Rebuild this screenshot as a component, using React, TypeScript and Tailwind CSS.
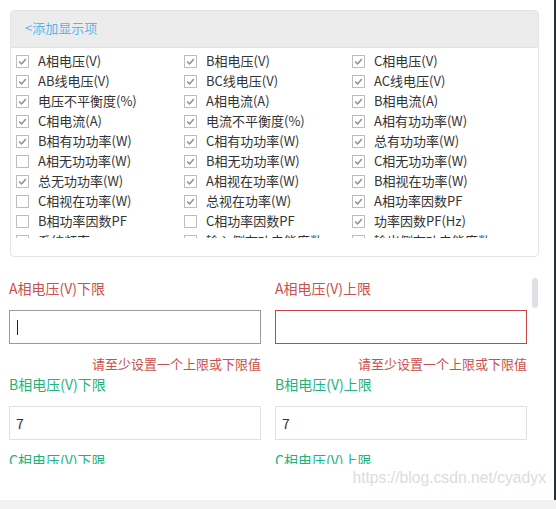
import React from 'react';

const items: [string, boolean][] = [
  ['A相电压(V)', true], ['B相电压(V)', true], ['C相电压(V)', true],
  ['AB线电压(V)', true], ['BC线电压(V)', true], ['AC线电压(V)', true],
  ['电压不平衡度(%)', true], ['A相电流(A)', true], ['B相电流(A)', true],
  ['C相电流(A)', true], ['电流不平衡度(%)', true], ['A相有功功率(W)', true],
  ['B相有功功率(W)', true], ['C相有功功率(W)', true], ['总有功功率(W)', true],
  ['A相无功功率(W)', false], ['B相无功功率(W)', true], ['C相无功功率(W)', true],
  ['总无功功率(W)', true], ['A相视在功率(W)', true], ['B相视在功率(W)', true],
  ['C相视在功率(W)', false], ['总视在功率(W)', true], ['A相功率因数PF', true],
  ['B相功率因数PF', false], ['C相功率因数PF', false], ['功率因数PF(Hz)', true],
  ['系统频率', false], ['输入侧有功电能度数', false], ['输出侧有功电能度数', false],
];

function Check({ checked }: { checked: boolean }) {
  return (
    <span className="w-[13px] h-[13px] border border-[#bdbdbd] bg-white flex items-center justify-center shrink-0">
      {checked && (
        <svg width="9" height="9" viewBox="0 0 9 9">
          <path d="M1.2 4.6 L3.6 7 L7.8 2" fill="none" stroke="#8a8a8a" strokeWidth="1.4" />
        </svg>
      )}
    </span>
  );
}

interface FieldProps {
  label: string;
  value?: string;
  state: 'error' | 'ok';
  focused?: boolean;
}

function Field({ label, value, state, focused }: FieldProps) {
  const err = state === 'error';
  return (
    <div className="flex flex-col">
      <div className={`text-[14px] leading-[20px] ${err ? 'text-[#c9504c]' : 'text-[#21b27a]'}`}>{label}</div>
      <div
        className={`mt-[12px] h-[34px] border flex items-center px-[6px] text-[14px] text-[#333] ${
          err ? (focused ? 'border-[#9a9a9a]' : 'border-[#c84646]') : 'border-[#e0e0e0]'
        }`}
      >
        {focused && <span className="w-px h-[15px] bg-[#222] ml-px" />}
        {value}
      </div>
      {err ? (
        <div className="mt-[10px] h-[20px] text-[13px] leading-[20px] text-right text-[#c9504c]">请至少设置一个上限或下限值</div>
      ) : (
        <div className="h-[10px]" />
      )}
    </div>
  );
}

export default function App() {
  return (
    <div
      className="w-[556px] h-[509px] bg-white relative overflow-hidden flex flex-col"
      style={{ fontFamily: '"Microsoft YaHei", "Noto Sans CJK SC", "Liberation Sans", sans-serif' }}
    >
      <div className="absolute right-0 top-0 w-[2px] h-[500px] bg-[#2b3035]" />

      <div className="mt-[10px] ml-[10px] w-[529px] h-[247px] border border-[#e4e4e4] rounded-[4px] flex flex-col overflow-hidden">
        <div className="h-[37px] shrink-0 bg-[#ececec] border-b border-[#e2e2e2] flex items-center pl-[14px] pb-[2px] text-[13px] text-[#5ab4f0]">
          &lt;添加显示项
        </div>
        <div className="h-[190px] overflow-hidden pt-[3px] pl-[5px]">
          <div className="grid grid-cols-[168px_168px_168px]">
            {items.map(([name, on]) => (
              <div key={name} className="h-[20px] flex items-center gap-[9px] text-[13px] text-[#333] whitespace-nowrap">
                <Check checked={on} />
                <span>{name}</span>
              </div>
            ))}
          </div>
        </div>
      </div>

      <div className="relative h-[207px] overflow-hidden pt-[21px] pl-[9px]">
        <div className="grid grid-cols-[252px_252px] gap-x-[14px]">
          <Field label="A相电压(V)下限" state="error" focused />
          <Field label="A相电压(V)上限" state="error" />
          <Field label="B相电压(V)下限" state="ok" value="7" />
          <Field label="B相电压(V)上限" state="ok" value="7" />
          <Field label="C相电压(V)下限" state="ok" />
          <Field label="C相电压(V)上限" state="ok" />
        </div>
        <div className="absolute left-[532px] top-[21px] w-[6px] h-[30px] rounded-full bg-[#dde1e6]" />
      </div>

      <div className="flex-1 relative">
        <div
          className="absolute right-[10px] bottom-[10px] text-[15.7px] text-[#dcdcdc]"
          style={{ fontFamily: '"Liberation Sans", Arial, sans-serif' }}
        >
          https://blog.csdn.net/cyadyx
        </div>
      </div>
      <div className="h-[9px] bg-[#f2f2f2]" />
    </div>
  );
}
